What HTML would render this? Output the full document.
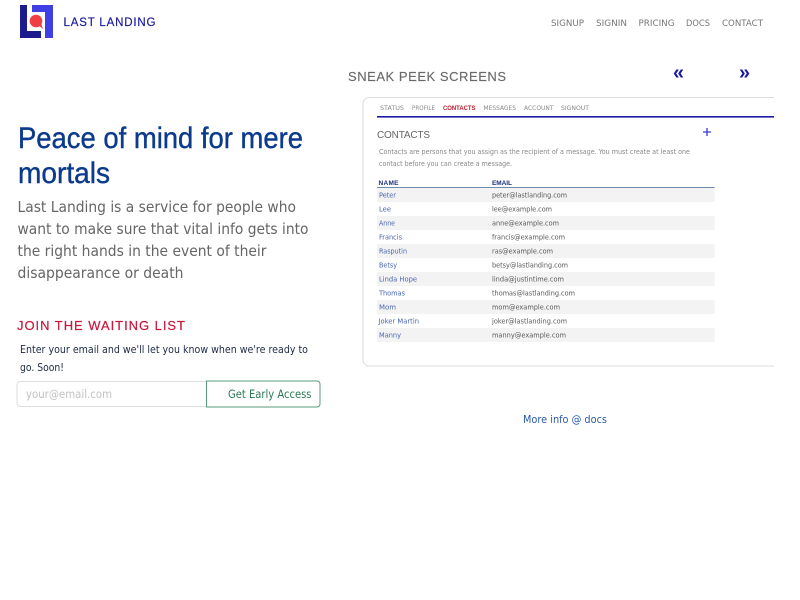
<!DOCTYPE html>
<html><head><meta charset="utf-8"><title>Last Landing</title>
<style>
html,body{margin:0;padding:0;background:#fff;width:800px;height:600px;overflow:hidden}
svg{display:block}
text{font-family:"Liberation Sans",sans-serif;white-space:pre}
.dv{font-family:"DejaVu Sans",sans-serif}
.n{font-family:"DejaVu Sans",sans-serif;font-size:8.500px;fill:#777}
.p{font-family:"DejaVu Sans",sans-serif;font-size:15.500px;fill:#666}
.h{font-size:29.500px;fill:#0c3a8c;stroke:#0c3a8c;stroke-width:.4px}
.t{font-family:"DejaVu Sans",sans-serif;font-size:6px;fill:#888}
.d{font-family:"DejaVu Sans",sans-serif;font-size:7px;fill:#888}
.a{font-family:"DejaVu Sans",sans-serif;font-size:7.200px;fill:#4a64b0}
.e{font-family:"DejaVu Sans",sans-serif;font-size:7.200px;fill:#5a5a5a}
.th{font-size:6.500px;font-weight:bold;fill:#1c2f78}
.blur{filter:blur(.25px)}
</style></head><body>
<svg width="800" height="600" viewBox="0 0 800 600" xmlns="http://www.w3.org/2000/svg">
<!-- logo -->
<path d="M32 5H53V38H45V12H32Z" fill="#3f3fe3"/>
<path d="M20 5H27V31H41V38H20Z" fill="#1c1c8e"/>
<circle cx="36" cy="21" r="6.300" fill="#ef3f45"/>
<path d="M38 25L43 29L41 23Z" fill="#ef3f45"/>
<text x="63.500" y="26" font-size="11.500" fill="#1a1aa0" stroke="#1a1aa0" stroke-width=".2" textLength="92" lengthAdjust="spacing">LAST LANDING</text>
<!-- nav -->
<text class="n" x="551" y="26" textLength="33" lengthAdjust="spacingAndGlyphs">SIGNUP</text>
<text class="n" x="596" y="26" textLength="31" lengthAdjust="spacingAndGlyphs">SIGNIN</text>
<text class="n" x="638.500" y="26" textLength="36" lengthAdjust="spacingAndGlyphs">PRICING</text>
<text class="n" x="686" y="26" textLength="24" lengthAdjust="spacingAndGlyphs">DOCS</text>
<text class="n" x="722" y="26" textLength="41" lengthAdjust="spacingAndGlyphs">CONTACT</text>
<!-- hero -->
<text class="h" x="18" y="148" textLength="285" lengthAdjust="spacingAndGlyphs">Peace of mind for mere</text>
<text class="h" x="18" y="183" textLength="92" lengthAdjust="spacingAndGlyphs">mortals</text>
<text class="p" x="17.500" y="212" textLength="278.500" lengthAdjust="spacingAndGlyphs">Last Landing is a service for people who</text>
<text class="p" x="17.500" y="234" textLength="291" lengthAdjust="spacingAndGlyphs">want to make sure that vital info gets into</text>
<text class="p" x="17.500" y="256" textLength="249" lengthAdjust="spacingAndGlyphs">the right hands in the event of their</text>
<text class="p" x="17.500" y="278" textLength="166" lengthAdjust="spacingAndGlyphs">disappearance or death</text>
<!-- waiting list -->
<text x="17" y="330" font-size="13" fill="#c8183c" stroke="#c8183c" stroke-width=".2" textLength="168" lengthAdjust="spacing">JOIN THE WAITING LIST</text>
<text class="dv" x="20" y="353" font-size="10.800" fill="#1f2a44" textLength="288" lengthAdjust="spacingAndGlyphs">Enter your email and we'll let you know when we're ready to</text>
<text class="dv" x="20" y="371" font-size="10.800" fill="#1f2a44" textLength="44" lengthAdjust="spacingAndGlyphs">go. Soon!</text>
<path d="M206.500 381.500H20a3 3 0 0 0-3 3V403.500a3 3 0 0 0 3 3H206.500" fill="#fff" stroke="#ddd"/>
<text class="dv" x="26" y="398" font-size="11.500" fill="#c2c2c2" textLength="86" lengthAdjust="spacingAndGlyphs">your@email.com</text>
<path d="M206.500 381H317a3 3 0 0 1 3 3V404a3 3 0 0 1-3 3H206.500Z" fill="#fff" stroke="#5a9a7c"/>
<text class="dv" x="228" y="398" font-size="11.500" fill="#2a7a55" textLength="83.500" lengthAdjust="spacingAndGlyphs">Get Early Access</text>
<!-- sneak peek -->
<text x="348" y="81" font-size="13" fill="#6a6a6a" stroke="#6a6a6a" stroke-width=".15" textLength="158" lengthAdjust="spacing">SNEAK PEEK SCREENS</text>
<text x="673" y="79" font-size="20" font-weight="bold" fill="#1a1aa0" textLength="11" lengthAdjust="spacingAndGlyphs">«</text>
<text x="739" y="79" font-size="20" font-weight="bold" fill="#1a1aa0" textLength="11" lengthAdjust="spacingAndGlyphs">»</text>
<!-- card -->
<path d="M774 97.500H369a6 6 0 0 0-6 6V360a6 6 0 0 0 6 6H774" fill="#fff" stroke="#dcdcdc" stroke-width="1"/>
<g class="blur">
<rect x="377" y="116" width="397" height="1.600" fill="#1a1aa8"/>
<text class="t" x="380" y="110" textLength="24" lengthAdjust="spacingAndGlyphs">STATUS</text>
<text class="t" x="412" y="110" textLength="23" lengthAdjust="spacingAndGlyphs">PROFILE</text>
<text x="443" y="110" font-size="6.500" font-weight="bold" fill="#c01a2e" textLength="32.500" lengthAdjust="spacingAndGlyphs">CONTACTS</text>
<text class="t" x="483.500" y="110" textLength="32.500" lengthAdjust="spacingAndGlyphs">MESSAGES</text>
<text class="t" x="524" y="110" textLength="29.500" lengthAdjust="spacingAndGlyphs">ACCOUNT</text>
<text class="t" x="561" y="110" textLength="28" lengthAdjust="spacingAndGlyphs">SIGNOUT</text>
<text x="377" y="138" font-size="10" fill="#666" textLength="53" lengthAdjust="spacing">CONTACTS</text>
<path d="M707 128V136M703 132H711" stroke="#3a3ad0" stroke-width="1.300" fill="none"/>
<text class="d" x="379" y="154" textLength="311" lengthAdjust="spacingAndGlyphs">Contacts are persons that you assign as the recipient of a message. You must create at least one</text>
<text class="d" x="379" y="166" textLength="133" lengthAdjust="spacingAndGlyphs">contact before you can create a message.</text>
<text class="th" x="378.500" y="185" textLength="20" lengthAdjust="spacing">NAME</text>
<text class="th" x="492" y="185" textLength="20" lengthAdjust="spacing">EMAIL</text>
<rect x="377" y="187" width="337.500" height="1" fill="#6f8bb0"/>
<g fill="#f3f3f3">
<rect x="377" y="188" width="337.500" height="14"/>
<rect x="377" y="216" width="337.500" height="14"/>
<rect x="377" y="244" width="337.500" height="14"/>
<rect x="377" y="272" width="337.500" height="14"/>
<rect x="377" y="300" width="337.500" height="14"/>
<rect x="377" y="328" width="337.500" height="14"/>
</g>
<text class="a" x="379" y="197.500" textLength="17" lengthAdjust="spacingAndGlyphs">Peter</text>
<text class="e" x="492" y="197.500" textLength="75" lengthAdjust="spacingAndGlyphs">peter@lastlanding.com</text>
<text class="a" x="379" y="211.500" textLength="12" lengthAdjust="spacingAndGlyphs">Lee</text>
<text class="e" x="492" y="211.500" textLength="60" lengthAdjust="spacingAndGlyphs">lee@example.com</text>
<text class="a" x="379" y="225.500" textLength="16" lengthAdjust="spacingAndGlyphs">Anne</text>
<text class="e" x="492" y="225.500" textLength="67" lengthAdjust="spacingAndGlyphs">anne@example.com</text>
<text class="a" x="379" y="239.500" textLength="23" lengthAdjust="spacingAndGlyphs">Francis</text>
<text class="e" x="492" y="239.500" textLength="73" lengthAdjust="spacingAndGlyphs">francis@example.com</text>
<text class="a" x="379" y="253.500" textLength="28" lengthAdjust="spacingAndGlyphs">Rasputin</text>
<text class="e" x="492" y="253.500" textLength="61" lengthAdjust="spacingAndGlyphs">ras@example.com</text>
<text class="a" x="379" y="267.500" textLength="18" lengthAdjust="spacingAndGlyphs">Betsy</text>
<text class="e" x="492" y="267.500" textLength="76" lengthAdjust="spacingAndGlyphs">betsy@lastlanding.com</text>
<text class="a" x="379" y="281.500" textLength="38" lengthAdjust="spacingAndGlyphs">Linda Hope</text>
<text class="e" x="492" y="281.500" textLength="72" lengthAdjust="spacingAndGlyphs">linda@justintime.com</text>
<text class="a" x="379" y="295.500" textLength="26" lengthAdjust="spacingAndGlyphs">Thomas</text>
<text class="e" x="492" y="295.500" textLength="83" lengthAdjust="spacingAndGlyphs">thomas@lastlanding.com</text>
<text class="a" x="379" y="309.500" textLength="17" lengthAdjust="spacingAndGlyphs">Mom</text>
<text class="e" x="492" y="309.500" textLength="68" lengthAdjust="spacingAndGlyphs">mom@example.com</text>
<text class="a" x="378.500" y="323.500" textLength="40.500" lengthAdjust="spacingAndGlyphs">Joker Martin</text>
<text class="e" x="492" y="323.500" textLength="75" lengthAdjust="spacingAndGlyphs">joker@lastlanding.com</text>
<text class="a" x="379" y="337.500" textLength="22" lengthAdjust="spacingAndGlyphs">Manny</text>
<text class="e" x="492" y="337.500" textLength="74" lengthAdjust="spacingAndGlyphs">manny@example.com</text>
</g>
<text class="dv" x="523" y="423" font-size="11" fill="#2a5aa0" textLength="84" lengthAdjust="spacingAndGlyphs">More info @ docs</text>
</svg>
</body></html>
